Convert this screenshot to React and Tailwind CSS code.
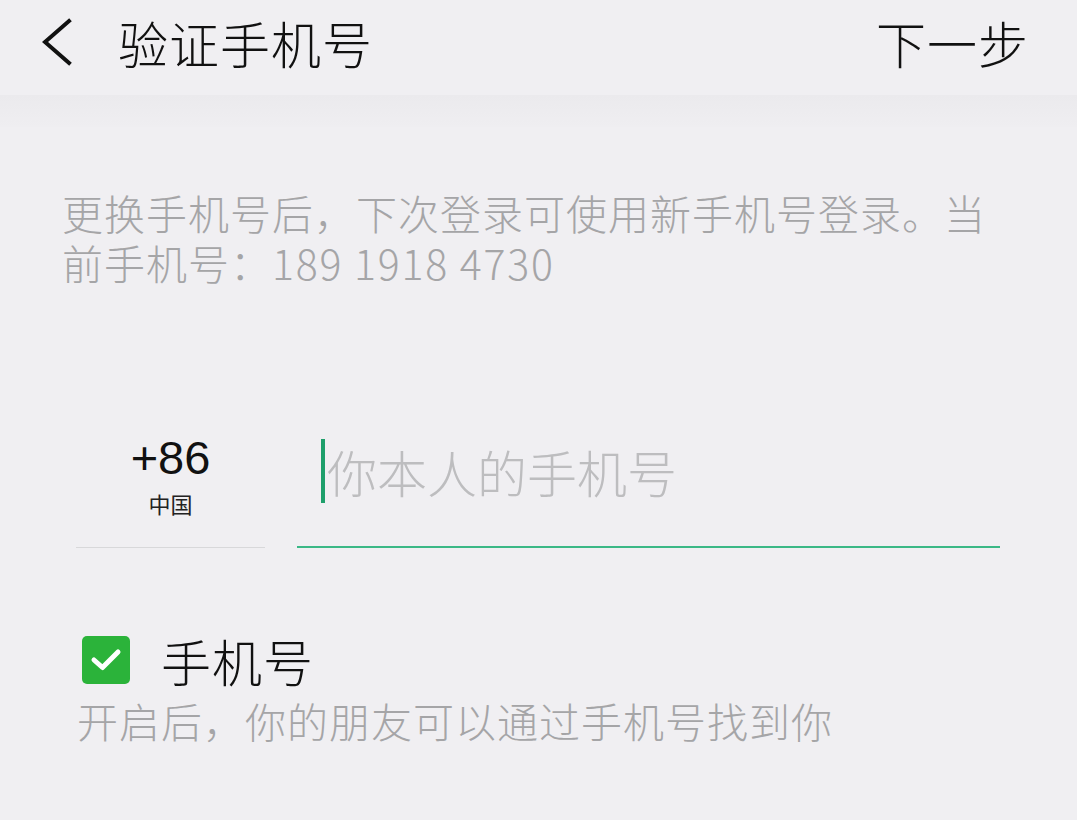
export default function App() {
  const font = { fontFamily: '"Noto Sans CJK SC", "Noto Sans", sans-serif' };
  return (
    <div className="w-[1077px] h-[820px] bg-[#f0eff2] overflow-hidden font-light" style={font}>
      {/* Header */}
      <div className="h-[95px] flex items-center justify-between pl-[42px] pr-[48px] pb-[12px]">
        <div className="flex items-center">
          <svg width="30" height="48" viewBox="0 0 30 48" className="block">
            <path d="M27 3 L3 24 L27 45" fill="none" stroke="#111" strokeWidth="4" strokeLinecap="square" />
          </svg>
          <span className="ml-[46px] text-[50px] leading-[54px] tracking-[1px] text-[#111]">验证手机号</span>
        </div>
        <span className="text-[50px] leading-[54px] text-[#111] tracking-[1px]">下一步</span>
      </div>
      <div className="h-[32px] bg-gradient-to-b from-[#ebeaed] to-[#efeef1]" />

      {/* Description */}
      <div className="mt-[60px] pl-[62px] w-[1010px] text-[41px] leading-[50px] tracking-[1px] text-[#a5a5a7]">
        更换手机号后，下次登录可使用新手机号登录。当前手机号：<span className="tracking-[1.8px]">189 1918 4730</span>
      </div>

      {/* Phone input row */}
      <div className="mt-[146px] flex">
        <div className="ml-[76px] w-[189px] h-[115px] border-b border-[#d8d8da] flex flex-col items-center">
          <span className="text-[47px] leading-[50px] text-[#111] font-normal" style={{ fontFamily: '"Liberation Sans", sans-serif' }}>+86</span>
          <span className="mt-[7px] text-[22px] leading-[26px] text-[#222] font-normal">中国</span>
        </div>
        <div className="ml-[32px] w-[703px] h-[115px] border-b-2 border-[#3bb886] flex items-start pt-[6px]">
          <div className="ml-[24px] w-[4px] h-[64px] bg-[#1e9f6b]" />
          <span className="ml-[2px] text-[50px] leading-[64px] text-[#bdbdbf]">你本人的手机号</span>
        </div>
      </div>

      {/* Checkbox row */}
      <div className="mt-[88px] ml-[82px] flex items-center h-[48px]">
        <div className="w-[48px] h-[48px] rounded-[5px] bg-[#2bb33a] flex items-center justify-center">
          <svg width="32" height="26" viewBox="0 0 32 26">
            <path d="M4 13 L12.5 20.5 L28 5" fill="none" stroke="#fff" strokeWidth="5" strokeLinecap="round" strokeLinejoin="round" />
          </svg>
        </div>
        <span className="ml-[31px] text-[50px] leading-[50px] tracking-[1px] text-[#111]">手机号</span>
      </div>
      <div className="mt-[11px] ml-[77px] text-[41px] leading-[50px] tracking-[1px] text-[#a5a5a7]">
        开启后，你的朋友可以通过手机号找到你
      </div>
    </div>
  );
}
